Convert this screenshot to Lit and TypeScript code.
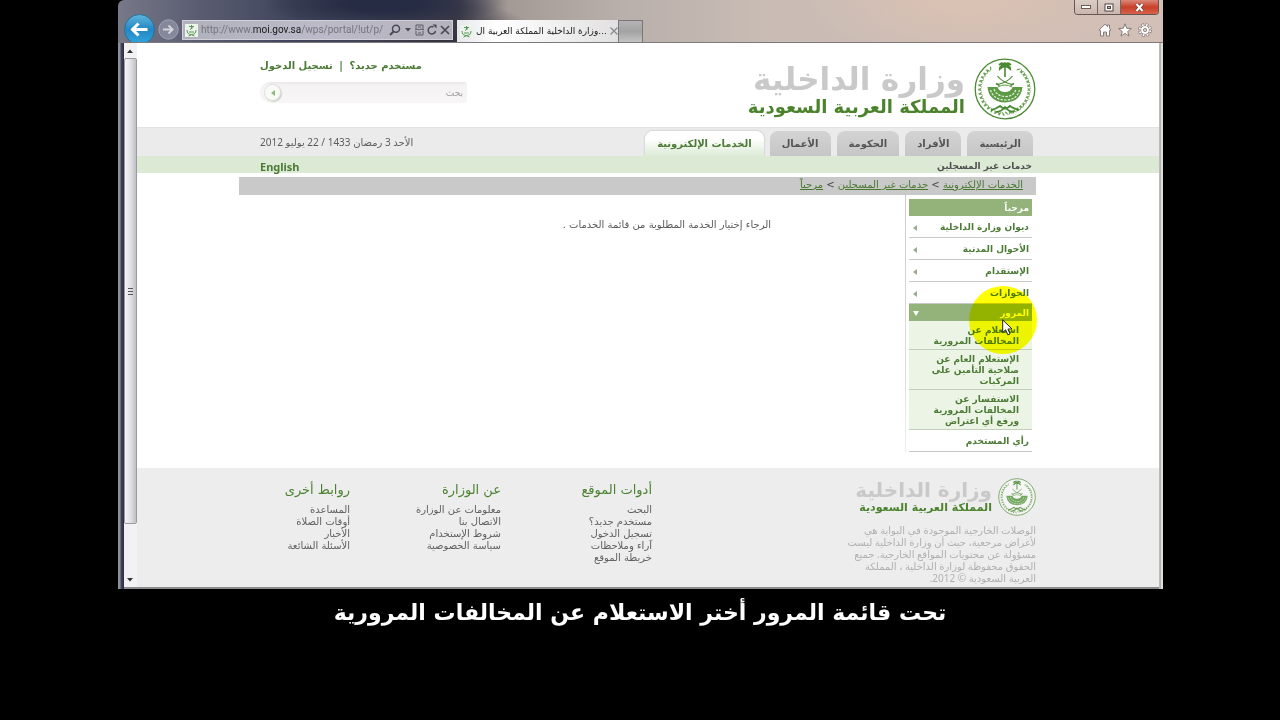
import { LitElement, html, css, svg } from "lit";
import { customElement, property } from "lit/decorators.js";

/** Round ministry seal: wreath, palm, crossed swords and bowl. */
@customElement("ministry-emblem")
export class MinistryEmblem extends LitElement {
  static styles = css`
    :host { display: block; }
    .seal { display: block; width: 100%; height: 100%; }
  `;
  private leaves() {
    const out = [];
    for (let i = 0; i < 15; i++) {
      const a = 98 + i * 9.5;
      const rad = (a * Math.PI) / 180;
      for (const s of [1, -1]) {
        const x = 31 - s * Math.cos(rad) * 24.5;
        const y = 31 + Math.sin(rad) * 24.5;
        const turn = 90 - s * (a - 90);
        out.push(svg`<path d="M-1.6 0Q0 -3.4 2.6 -3.2Q1.6 -.8 -1.6 0ZM-1.6 0Q0 3.4 2.6 3.2Q1.6 .8 -1.6 0Z"
          transform="translate(${x.toFixed(1)} ${y.toFixed(1)}) rotate(${turn.toFixed(0)}) scale(${-s} 1)"></path>`);
      }
    }
    return out;
  }
  render() {
    return html`<svg class="seal" viewBox="0 0 62 62" aria-hidden="true">
      <circle cx="31" cy="31" r="29.8" fill="#fff" fill-opacity=".55" stroke="#4a8a32" stroke-width="1.3"/>
      <g fill="#6aa052">${this.leaves()}</g>
      <g fill="none" stroke="#4a8a32">
        <path d="M31 8V19" stroke-width="1.6"/>
        <path d="M31 7q-3-4-6 0q2-1 3.500 1q-3 0-3 3.500q3-3 5.500-3q2.500 0 5.500 3q0-3.500-3-3.500q1.500-2 3.500-1q-3-4-6 0M31 4v5" stroke-width="1.3" fill="#4a8a32"/>
        <path d="M23.500 18q5 6.500 15 8.500M38.500 18q-5 6.500-15 8.500" stroke-width="1.2"/>
        <path d="M22 25.500l3.500 2M40 25.500l-3.500 2" stroke-width="1.5"/>
      </g>
      <path d="M13.500 29h10q1.500 5 7.500 5t7.500-5h10q-1.500 15-17.500 15.500Q15 44 13.500 29Z" fill="#5c9a45"/>
      <path d="M16.500 32q3 9.500 14.500 10t14.500-10M20 31q2.500 7 11 7.500t11-7.500" fill="none" stroke="#e6f1e0" stroke-width="1.2" stroke-dasharray="2.4 1.2"/>
      <path d="M24 29q7-4 14 0" fill="none" stroke="#5c9a45" stroke-width="1"/>
      <path d="M17 52q5-1 9-4q5 5 10 0q4 3 9 4M22 54q5 0 9-5q4 5 9 5" fill="none" stroke="#4a8a32" stroke-width="1.8"/>
    </svg>`;
  }
}

/** Seal with the two-line name of the ministry beside it. */
@customElement("ministry-logo")
export class MinistryLogo extends LitElement {
  @property({ type: Boolean, reflect: true }) small = false;
  static styles = css`
    :host { display: block; }
    .logo { display: flex; gap: 9px; align-items: center; direction: rtl; text-decoration: none; white-space: nowrap; }
    .seal { width: 62px; height: 62px; flex: none; }
    .name { display: block; font: bold 31px/36px "DejaVu Sans", sans-serif; color: #c9c9c9; }
    .land { display: block; font: bold 18px/20px "DejaVu Sans", sans-serif; color: #4a832c; }
    :host([small]) .logo { gap: 6px; }
    :host([small]) .seal { width: 38px; height: 38px; opacity: .85; }
    :host([small]) .name { font-size: 20px; line-height: 22px; }
    :host([small]) .land { font-size: 11px; line-height: 14px; }
  `;
  render() {
    return html`<a class="logo" href="#">
      <ministry-emblem class="seal"></ministry-emblem>
      <span><span class="name">وزارة الداخلية</span><span class="land">المملكة العربية السعودية</span></span>
    </a>`;
  }
}

/** Window frame with navigation controls, address bar and tabs. */
@customElement("browser-bar")
export class BrowserBar extends LitElement {
  static styles = css`
    :host { display: block; }
    button { border: 0; padding: 0; margin: 0; background: none; font: inherit; }
    svg { display: block; flex: none; }
    .bar { display: flex; height: 43px; box-sizing: border-box; padding: 0 4px 0 6px; border-bottom: 1px solid #7d7a7e; overflow: hidden; }
    .back { width: 31px; height: 31px; margin-top: 14px; flex: none; }
    .forward { width: 21px; height: 21px; margin: 19px 3px 0; flex: none; }
    .address { display: flex; align-items: center; width: 271px; height: 20px; margin-top: 20px; box-sizing: border-box; padding: 0 2px; background: linear-gradient(90deg, #b0b1bd, #bcbac8 50%, #b5b3bd); border: 1px solid #d0d0d8; color: #74747e; font: 10px/18px "Roboto", "DejaVu Sans", sans-serif; gap: 3px; }
    .url { flex: 1; white-space: nowrap; }
    .host { color: #17171c; }
    .tools { display: flex; align-items: center; gap: 3px; }
    .tab { display: flex; align-items: center; gap: 3px; width: 161px; height: 22px; margin: 20px 0 0 4px; padding: 0 3px; box-sizing: border-box; background: linear-gradient(90deg, #e6e7ea, #fff 25%, #ededee 70%, #e2e0e1); color: #16161a; font: 9px/20px "DejaVu Sans", sans-serif; }
    .title { flex: 1; direction: rtl; white-space: nowrap; text-align: right; }
    .fresh { width: 25px; height: 22px; margin-top: 20px; border: 1px solid #77767a; border-bottom: 0; background: linear-gradient(#b5b3b4, #a3a3a4 50%, #c4c3c3); }
    .spacer { flex: 1; }
    .right { display: flex; flex-direction: column; align-items: flex-end; }
    .window { display: flex; height: 15px; box-sizing: border-box; border: 1px solid #655853; border-top: 0; border-radius: 0 0 4px 4px; overflow: hidden; }
    .win { width: 23px; height: 14px; display: grid; place-items: center; background: linear-gradient(#dccdc7, #c9b6ae); border-right: 1px solid #75655f; }
    .close { width: 37px; border: 0; background: linear-gradient(#d98a78, #c8402a 50%, #d9604a); }
    .page { display: flex; gap: 6px; margin: 8px 7px 0 0; }
  `;
  private icon() {
    return html`<svg width="13" height="13" viewBox="0 0 13 13" aria-hidden="true"><rect width="13" height="13" fill="#edf3ea"/><path d="M4 2.500h5M6.500 1v4M5 5.500l3-2M2 6q0 4.500 4.500 4.500T11 6M3.500 12q3-2.500 6 0M4 8h5" fill="none" stroke="#58985a" stroke-width="1"/></svg>`;
  }
  render() {
    return html`<div class="bar">
      <button class="back" aria-label="Back"><svg viewBox="0 0 31 31"><defs><linearGradient id="b" x2="0" y2="1"><stop stop-color="#5fb6dd"/><stop offset=".5" stop-color="#2387c2"/><stop offset="1" stop-color="#2fa6df"/></linearGradient></defs><circle cx="15.500" cy="15.500" r="15" fill="url(#b)" stroke="#2a6f99"/><path d="M23.500 15.500H9M14.500 9.500l-6 6l6 6" fill="none" stroke="#fff" stroke-width="3"/></svg></button>
      <button class="forward" aria-label="Forward"><svg viewBox="0 0 21 21"><circle cx="10.500" cy="10.500" r="9.700" fill="#85879a" stroke="#a3a4b2"/><path d="M5 10.500h9M10.500 6.500l4 4l-4 4" fill="none" stroke="#d3d4dc" stroke-width="2"/></svg></button>
      <div class="address" role="textbox" aria-label="Address">
        ${this.icon()}
        <span class="url">http://www.<span class="host">moi.gov.sa</span>/wps/portal/!ut/p/</span>
        <span class="tools">
          <button aria-label="Search"><svg width="12" height="12" viewBox="0 0 12 12"><circle cx="7" cy="4.800" r="3.500" fill="none" stroke="#4a4a55" stroke-width="1.500"/><path d="M4.500 7.500L1 11" stroke="#4a4a55" stroke-width="2"/></svg></button>
          <button aria-label="Search options"><svg width="8" height="6" viewBox="0 0 8 6"><path d="M1 1h6l-3 3.500z" fill="#4a4a55"/></svg></button>
          <button aria-label="Compatibility view"><svg width="9" height="12" viewBox="0 0 9 12"><path d="M1 5V1h7v4M1 7v4h7V7M0 6l2-1l2 1l2-1l3 1M3 3h3M3 9h3" fill="none" stroke="#5a5a64"/></svg></button>
          <button aria-label="Refresh"><svg width="10" height="12" viewBox="0 0 10 12"><path d="M8.500 7A3.700 3.700 0 1 1 6.500 3" fill="none" stroke="#4a4a55" stroke-width="1.500"/><path d="M5.500 .500h4v4z" fill="#4a4a55"/></svg></button>
          <button aria-label="Stop"><svg width="10" height="10" viewBox="0 0 10 10"><path d="M1 1l8 8M9 1L1 9" stroke="#4a4a55" stroke-width="1.700"/></svg></button>
        </span>
      </div>
      <div class="tab">${this.icon()}<span class="title">...وزارة الداخلية المملكة العربية ال</span>
        <button aria-label="Close tab"><svg width="8" height="8" viewBox="0 0 8 8"><path d="M.500 .500l7 7M7.500 .500l-7 7" stroke="#8a8a8e" stroke-width="1.300"/></svg></button></div>
      <button class="fresh" aria-label="New tab"></button>
      <span class="spacer"></span>
      <div class="right">
        <div class="window">
          <button class="win" aria-label="Minimize"><svg width="10" height="5" viewBox="0 0 10 5"><rect x=".5" y=".5" width="9" height="3" fill="#fff" stroke="#6b5c57"/></svg></button>
          <button class="win" aria-label="Maximize"><svg width="10" height="9" viewBox="0 0 10 9"><rect x="1" y="1" width="8" height="7" fill="#fff" stroke="#4f4542"/><rect x="3.500" y="3.500" width="3" height="2" fill="#bba" stroke="#4f4542"/></svg></button>
          <button class="win close" aria-label="Close"><svg width="9" height="9" viewBox="0 0 9 9"><path d="M1.500 1l6 7M7.500 1l-6 7" stroke="#5a3630" stroke-width="3.400"/><path d="M1.500 1l6 7M7.500 1l-6 7" stroke="#fff" stroke-width="2"/></svg></button>
        </div>
        <div class="page">
          <button aria-label="Home"><svg width="14" height="14" viewBox="0 0 14 14"><path d="M1 7L7 1.200L9.500 3.600V2h2v3.500L13 7l-1.500 .500V13H8.500V9h-3v4H2.500V7.500z" fill="#fff" stroke="#857c79"/></svg></button>
          <button aria-label="Favorites"><svg width="14" height="14" viewBox="0 0 14 14"><path d="M7 .800l1.700 4.500 4.700 .200-3.700 3 1.300 4.600L7 10.400l-4 2.700 1.300-4.600-3.700-3 4.700-.200z" fill="#fff" stroke="#857c79"/></svg></button>
          <button aria-label="Tools"><svg width="14" height="14" viewBox="0 0 14 14"><circle cx="7" cy="7" r="5.300" fill="none" stroke="#857c79" stroke-width="3.200" stroke-dasharray="2.560 1.600"/><circle cx="7" cy="7" r="4.400" fill="#fff" stroke="#857c79" stroke-width=".8"/><circle cx="7" cy="7" r="5.300" fill="none" stroke="#fff" stroke-width="1.800" stroke-dasharray="1.560 2.600" stroke-dashoffset="-.5"/><circle cx="7" cy="7" r="1.700" fill="#d5c6c0" stroke="#857c79" stroke-width=".8"/></svg></button>
        </div>
      </div>
    </div>`;
  }
}

const tabs = ["الرئيسية", "الأفراد", "الحكومة", "الأعمال", "الخدمات الإلكترونية"];
const crumbs = ["الخدمات الإلكترونية", "خدمات غير المسجلين", "مرحباً"];
const sections = ["ديوان وزارة الداخلية", "الأحوال المدنية", "الإستقدام", "الجوازات"];
const services = [
  ["استعلام عن", "المخالفات المرورية"],
  ["الإستعلام العام عن", "صلاحية التأمين على", "المركبات"],
  ["الاستفسار عن", "المخالفات المرورية", "ورفع أي اعتراض"],
];
const columns = [
  { title: "أدوات الموقع", links: ["البحث", "مستخدم جديد؟", "تسجيل الدخول", "آراء وملاحظات", "خريطة الموقع"] },
  { title: "عن الوزارة", links: ["معلومات عن الوزارة", "الاتصال بنا", "شروط الإستخدام", "سياسة الخصوصية"] },
  { title: "روابط أخرى", links: ["المساعدة", "أوقات الصلاة", "الأخبار", "الأسئلة الشائعة"] },
];
const notice = [
  "الوصلات الخارجية الموجودة في البوابة هي",
  "لأغراض مرجعية، حيث أن وزارة الداخلية ليست",
  "مسؤولة عن محتويات المواقع الخارجية. جميع",
  "الحقوق محفوظة لوزارة الداخلية ، المملكة",
  "العربية السعودية © 2012.",
];
const lines = (parts: string[]) => parts.map((t, i) => (i ? html`<br>${t}` : t));

@customElement("app-root")
export class AppRoot extends LitElement {
  static styles = css`
    :host { display: block; min-height: 100vh; background: #000; font-family: "Noto Sans", "DejaVu Sans", sans-serif; }
    a { color: inherit; text-decoration: none; }
    ul, h2, p { margin: 0; padding: 0; list-style: none; font-weight: inherit; }
    .window { margin: 0 117px 0 118px; border-radius: 6px 0 0 0; overflow: hidden;
      background:
        radial-gradient(ellipse 120px 24px at 265px 4px, #262c44 30%, #262c4400),
        radial-gradient(ellipse 90px 40px at 330px 40px, #34333f, #34333f00),
        radial-gradient(ellipse 160px 60px at 850px 0, #d9c1b3 20%, #d9c1b300),
        linear-gradient(90deg, #777888 0, #5a5d72 80px, #3f435a 180px, #45424f 340px, #a39995 390px, #b9afaa 500px, #c9bcb5 650px, #cdbdb6 850px, #d3bfb6 100%); }
    .frame { display: grid; grid-template-columns: 13px 1fr; padding: 0 4px 2px 6px;
      background: linear-gradient(90deg, #8d8f9c 0 2px, #444659 3px, #2c2c48 6px, #0000 6px calc(100% - 4px), #eee calc(100% - 4px), #888 calc(100% - 3px), #e2dedc calc(100% - 2px)), #8b8b8d; }
    .scroll { display: flex; flex-direction: column; align-items: center; background: #f2f2f4; }
    .arrow { height: 15px; display: grid; place-items: center; }
    .thumb { flex: 1; width: 11px; border: 1px solid #9b9b9f; border-radius: 2px; background: linear-gradient(90deg, #f4f4f6, #e2e2e6 50%, #bfbfc6); display: grid; place-items: center; margin-bottom: 48px; }
    .site { direction: rtl; background: #fff; overflow: hidden; min-width: 0; }
    .wrap { margin: 0 123px 0 102px; }
    .head { display: flex; justify-content: space-between; height: 84px; box-sizing: border-box; padding: 15px 0 0 21px; }
    .account { direction: ltr; width: 207px; font: bold 10px/16px "DejaVu Sans", sans-serif; color: #4b7a35; }
    .links { direction: rtl; text-align: left; white-space: nowrap; }
    .bar { padding: 0 3px; }
    .search { display: flex; align-items: center; margin-top: 8px; height: 21px; border-radius: 10px 3px 3px 10px; background: linear-gradient(#e9e7e8, #f5f2f3 3px, #f8f6f7); padding: 0 4px; box-sizing: border-box; }
    .term { flex: 1; min-width: 0; border: 0; padding: 0; background: none; direction: rtl; font: 9px/18px "DejaVu Sans", sans-serif; color: #9a9a9a; outline: 0; }
    .go { width: 17px; height: 17px; padding: 0; border: 1px solid #dfe3dc; border-radius: 50%; background: #f7faf5; display: grid; place-items: center; box-shadow: 1px 1px 1px #cfcfcf; }
    .nav { background: #ebebeb; border-top: 1px solid #e2e2e2; height: 28px; }
    .navrow { display: flex; justify-content: space-between; padding: 3px 3px 0 21px; }
    .tabs { display: flex; gap: 6px; font: bold 10px/25px "DejaVu Sans", sans-serif; color: #555; white-space: nowrap; }
    .tab { display: block; padding: 0 12px; height: 25px; border-radius: 8px 8px 0 0; background: linear-gradient(#d3d3d3, #c6c6c6); }
    .tab.on { color: #4b7a35; background: linear-gradient(#fff 30%, #dcebd6); box-shadow: 0 0 2px #aaa; clip-path: inset(-3px -3px 0 -3px); }
    .date { font-size: 10px; line-height: 22px; color: #5d5d5d; }
    .sub { background: #dbe9d5; height: 17px; }
    .subrow { display: flex; justify-content: space-between; padding: 0 4px 0 21px; font-weight: bold; font-size: 10px; line-height: 21px; color: #4b7a35; }
    .here { color: #505050; font-family: "DejaVu Sans", sans-serif; font-size: 9px; }
    .lang { font-size: 11px; }
    .crumbs { margin-top: 4px; background: #c9c9c9; height: 18px; padding-right: 13px; font: 10px/15px "DejaVu Sans", sans-serif; color: #444; white-space: nowrap; }
    .crumb { color: #48782e; text-decoration: underline; }
    .main { display: flex; height: 273px; }
    .side { width: 123px; padding: 4px 4px 0 3px; font: bold 9px/17px "DejaVu Sans", sans-serif; color: #4b7a35; }
    .menu { position: relative; }
    .side-line { width: 1px; height: 257px; background: linear-gradient(#ccc, #ddd 70%, #eee); }
    .green, .item { display: flex; justify-content: space-between; align-items: center; box-sizing: border-box; padding: 2px 3px 0 4px; white-space: nowrap; }
    .green { background: #93b37b; color: #fff; height: 17px; line-height: 15px; }
    .item { height: 22px; border-bottom: 1px solid #c9c9c9; }
    .service { display: block; padding: 4px 13px 2px 4px; line-height: 11px; background: #ecf4e6; border-bottom: 1px solid #c3cebc; white-space: nowrap; }
    .spot { position: absolute; right: -5px; top: 87px; width: 68px; height: 68px; border-radius: 50%; background: #ffff00; mix-blend-mode: multiply; }
    .pointer { position: absolute; right: 19px; top: 120px; }
    .body { flex: 1; padding: 23px 134px 0 0; font: 10px/14px "DejaVu Sans", sans-serif; color: #5a5a5a; }
    .foot { background: #ededed; height: 119px; }
    .footgrid { display: grid; grid-template-columns: 384px 151px 151px 1fr; padding-top: 10px; white-space: nowrap; }
    .notice { color: #b0b0b0; font-size: 10px; line-height: 12px; margin-top: 8px; }
    .title { font: 13px/18px "DejaVu Sans", sans-serif; color: #4b8332; margin: 3px 0 5px; }
    .list { font: 10px/12px "DejaVu Sans", sans-serif; color: #606060; }
    .caption { margin: 4px 0 0; text-align: center; direction: rtl; color: #fff; font: bold 22px/40px "DejaVu Sans", sans-serif; }
  `;
  private left(color: string) {
    return svg`<svg width="4" height="6" viewBox="0 0 4 6" aria-hidden="true"><path d="M4 0V6L0 3z" fill=${color}/></svg>`;
  }
  render() {
    return html`
      <div class="window">
        <browser-bar></browser-bar>
        <div class="frame">
          <div class="scroll" aria-hidden="true">
            <span class="arrow"><svg width="7" height="4" viewBox="0 0 7 4"><path d="M0 4h6L3 .500z" fill="#333"/></svg></span>
            <span class="thumb"><svg width="5" height="7" viewBox="0 0 5 7"><path d="M0 .500h5M0 3.500h5M0 6.500h5" stroke="#55555c"/></svg></span>
            <span class="arrow"><svg width="7" height="4" viewBox="0 0 7 4"><path d="M0 0h6L3 3.500z" fill="#333"/></svg></span>
          </div>
          <div class="site" dir="rtl" lang="ar">
            <header class="wrap head">
              <ministry-logo></ministry-logo>
              <div class="account">
                <div class="links"><a href="#">مستخدم جديد؟</a><span class="bar"> | </span><a href="#">تسجيل الدخول</a></div>
                <form class="search" @submit=${(e: Event) => e.preventDefault()}>
                  <button class="go" aria-label="بحث">${this.left("#8fb67f")}</button>
                  <input class="term" aria-label="بحث" value="بحث">
                </form>
              </div>
            </header>
            <nav class="nav"><div class="wrap navrow">
              <div class="tabs">${tabs.map((t, i) => html`<a class="tab ${i === 4 ? "on" : ""}" href="#">${t}</a>`)}</div>
              <span class="date">الأحد 3 رمضان 1433 / 22 يوليو 2012</span>
            </div></nav>
            <div class="sub"><div class="wrap subrow"><span class="here">خدمات غير المسجلين</span><a class="lang" href="#" lang="en">English</a></div></div>
            <div class="wrap">
              <nav class="crumbs">${crumbs.map((c, i) => html`${i ? " > " : ""}<a class="crumb" href="#">${c}</a>`)}</nav>
              <div class="main">
                <aside class="side"><div class="menu">
                  <div class="green">مرحباً</div>
                  ${sections.map((s) => html`<a class="item" href="#">${s}${this.left("#9aaa92")}</a>`)}
                  <a class="green" href="#">المرور<svg width="6" height="5" viewBox="0 0 6 5" aria-hidden="true"><path d="M0 0h6L3 5z" fill="#fff"/></svg></a>
                  ${services.map((s) => html`<a class="service" href="#">${lines(s)}</a>`)}
                  <a class="item" href="#">رأي المستخدم</a>
                  <div class="spot"></div>
                  <svg class="pointer" width="11" height="17" viewBox="0 0 11 17" aria-hidden="true"><path d="M.700 .800V13.500L3.600 10.800L5.800 15.800L8 14.900L5.900 10H10z" fill="#fff" stroke="#222"/></svg>
                </div></aside>
                <div class="side-line"></div>
                <p class="body">الرجاء إختيار الخدمة المطلوبة من قائمة الخدمات .</p>
              </div>
            </div>
            <footer class="foot"><div class="wrap footgrid">
              <div><ministry-logo small></ministry-logo><p class="notice">${lines(notice)}</p></div>
              ${columns.map((c) => html`<div><h2 class="title">${c.title}</h2><ul class="list">${c.links.map((l) => html`<li><a href="#">${l}</a></li>`)}</ul></div>`)}
            </div></footer>
          </div>
        </div>
      </div>
      <p class="caption">تحت قائمة المرور أختر الاستعلام عن المخالفات المرورية</p>
    `;
  }
}
